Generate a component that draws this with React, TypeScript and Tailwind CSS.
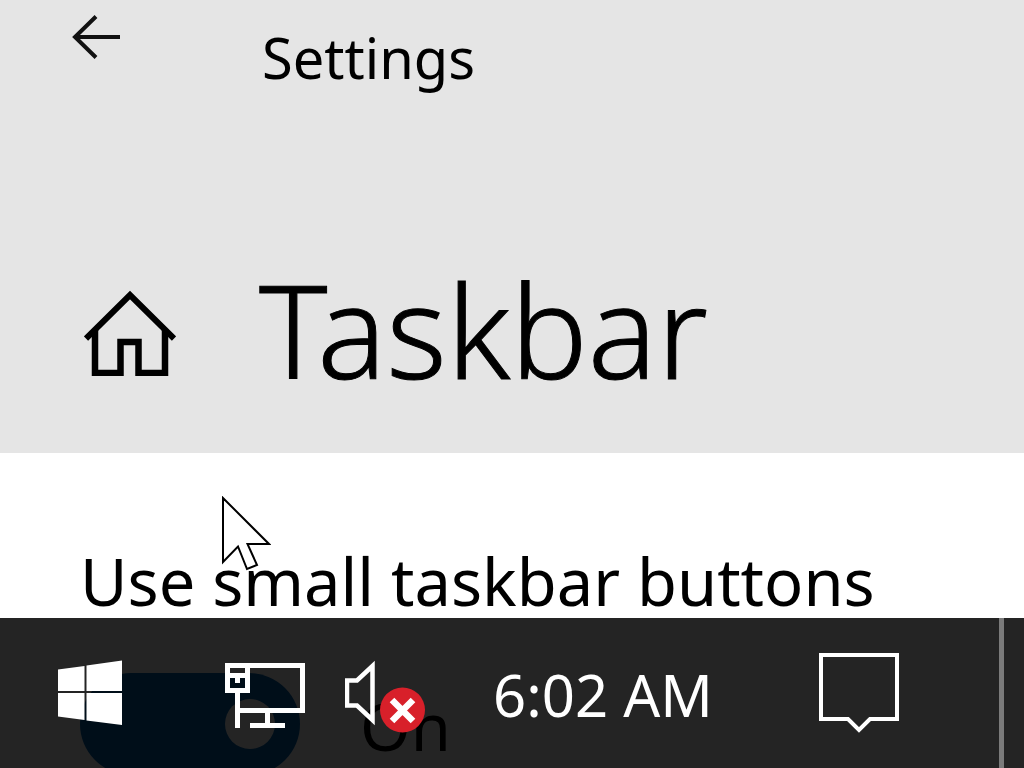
import { useState } from "react";

function BackIcon() {
  return (
    <svg className="h-11 w-12" viewBox="0 0 48 44" fill="none" stroke="#111" strokeWidth="4">
      <path d="M48 22H4M24 1.500 3 22l21 20.500" />
    </svg>
  );
}

function HomeIcon() {
  return (
    <svg className="h-[86px] w-[92px]" viewBox="0 0 92 86" fill="none" stroke="#000" strokeWidth="6">
      <path d="M2 48.500 46 5 90 48.500" />
      <path d="M11 39V83H36.500V52H54.500V83H81V39" strokeWidth="6.500" />
    </svg>
  );
}

function PointerIcon() {
  return (
    <svg className="h-[76px] w-[50px]" viewBox="0 0 50 76" fill="#fff" stroke="#000" strokeWidth="2">
      <path d="M2 2V66L17 50.500 26 73 36 69 26.500 48H48Z" />
    </svg>
  );
}

function StartIcon() {
  return (
    <svg className="h-[66px] w-16" viewBox="0 0 64 66" fill="#fff">
      <path d="M0 9.500 26.500 6V31H0ZM28.500 5.500 64 0.500V31H28.500ZM0 33H26.500V60L0 56.500ZM28.500 33H64V65L28.500 60.500Z" />
    </svg>
  );
}

function NetworkIcon() {
  return (
    <svg className="h-[72px] w-20" viewBox="0 -6 80 72" fill="none" stroke="#fff" strokeWidth="5">
      <path d="M22 2.500H77.500V47.500H12" />
      <path d="M2.500 2.500H22.500V27.500H2.500Z" />
      <path d="M5 12.500H20M12.500 12V20" />
      <path d="M12.500 28V65M42.500 48V62M25 62.500H60" />
    </svg>
  );
}

function VolumeIcon() {
  return (
    <svg className="h-20 w-20" viewBox="0 -1 80 80" fill="none" stroke="#fff" strokeWidth="4.500">
      <path d="M2 26.500H12L27.500 12V66L12 51.500H2Z" />
      <circle cx="57.500" cy="56" r="22.500" fill="#d8202a" stroke="none" />
      <path d="M47 46 68 67M68 46 47 67" strokeWidth="6.500" />
    </svg>
  );
}

function NotificationIcon() {
  return (
    <svg className="h-20 w-20" viewBox="0 0 80 80" fill="none" stroke="#fff" strokeWidth="4">
      <path d="M2 2H78V66H51L40 77 29 66H2Z" />
    </svg>
  );
}

function Header() {
  return (
    <header className="bg-[#e5e5e5] pb-10 text-black">
      <div className="flex items-start pl-[72px] pt-[15px]">
        <button type="button" aria-label="Back" className="w-[190px] shrink-0">
          <BackIcon />
        </button>
        <span className="pt-3 text-[56px] leading-[60px]">Settings</span>
      </div>
      <div className="flex items-center pl-[84px] pt-[166px]">
        <a href="#home" aria-label="Home" className="w-[175px] shrink-0">
          <HomeIcon />
        </a>
        <h1 className="pb-2 text-[129px] leading-[152px] font-light [-webkit-text-stroke:1px_black]">
          Taskbar
        </h1>
      </div>
    </header>
  );
}

function Taskbar() {
  return (
    <footer className="absolute inset-x-0 bottom-0 flex h-[150px] items-center bg-black/86 text-white">
      <button type="button" aria-label="Start" className="ml-[58px]">
        <StartIcon />
      </button>
      <button type="button" aria-label="Network" className="ml-[103px]">
        <NetworkIcon />
      </button>
      <button type="button" aria-label="Volume muted" className="ml-10">
        <VolumeIcon />
      </button>
      <time className="ml-[68px] pt-1 text-[58px] leading-[72px] whitespace-nowrap">6:02 AM</time>
      <button type="button" aria-label="Notifications" className="ml-auto mr-[100px]">
        <NotificationIcon />
      </button>
      <button
        type="button"
        aria-label="Show desktop"
        className="h-full w-[25px] border-l-5 border-[#7b7b7b]"
      />
    </footer>
  );
}

export default function App() {
  const [small, setSmall] = useState(true);

  return (
    <div className="relative h-screen overflow-hidden bg-white font-['Noto_Sans','Open_Sans',sans-serif] text-black">
      <Header />
      <main className="pl-20 pt-[88px]">
        <label htmlFor="small-buttons" className="block text-[65px] leading-[80px] whitespace-nowrap">
          Use small taskbar buttons
        </label>
        <div className="mt-[52px] flex items-center gap-[60px]">
          <input
            id="small-buttons"
            type="checkbox"
            role="switch"
            checked={small}
            onChange={(e) => setSmall(e.target.checked)}
            className="flex h-[102px] w-[220px] appearance-none items-center justify-end rounded-full bg-[#0063b1] px-[25px] before:size-[50px] before:rounded-full before:bg-white"
          />
          <span className="pt-1 text-[65px] leading-[72px]">{small ? "On" : "Off"}</span>
        </div>
      </main>
      <div className="pointer-events-none absolute left-[221px] top-[496px]">
        <PointerIcon />
      </div>
      <Taskbar />
    </div>
  );
}
